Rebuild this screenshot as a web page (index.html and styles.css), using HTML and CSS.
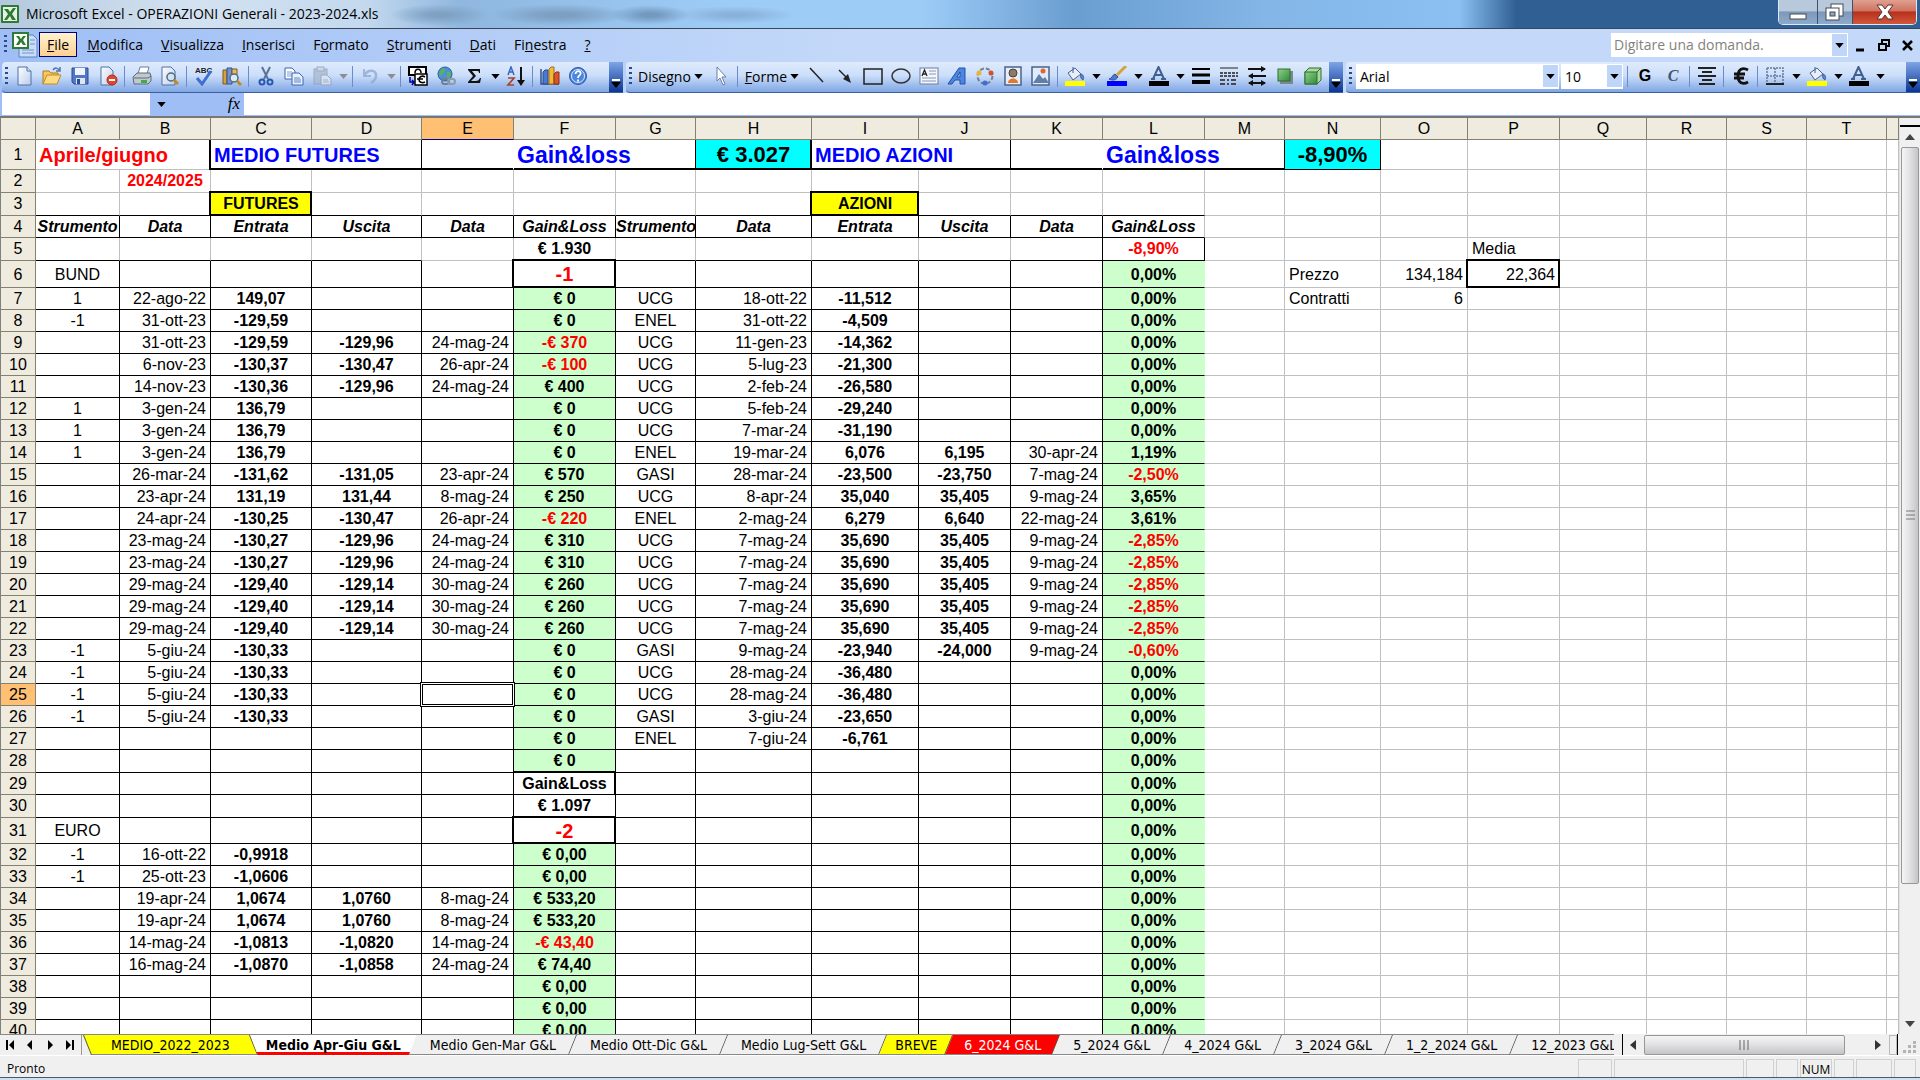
FILE: index.html
```html
<!DOCTYPE html>
<html lang="it">
<head>
<meta charset="utf-8">
<title>Microsoft Excel - OPERAZIONI Generali - 2023-2024.xls</title>
<link rel="stylesheet" href="styles.css">
</head>
<body>
<svg class="defs" aria-hidden="true">
  <defs>
    <linearGradient id="paper" x1="0" y1="0" x2="1" y2="1"><stop offset="0" stop-color="#fff"/><stop offset="1" stop-color="#b9cdee"/></linearGradient>
    <linearGradient id="green" x1="0" y1="0" x2="1" y2="1"><stop offset="0" stop-color="#8fd08a"/><stop offset="1" stop-color="#2f8a3a"/></linearGradient>
    <symbol id="i-xl" viewBox="0 0 20 20"><rect x="1" y="1" width="18" height="18" rx="1" fill="#2f7a34"/><rect x="3" y="3" width="14" height="14" fill="#e6f3e4"/><path d="M4 5h4l2 3 3-4h3l-4 6 4 6h-4l-2-4-3 4H4l4-6z" fill="#2c7c32"/></symbol>
    <symbol id="i-book" viewBox="0 0 26 26"><path d="M7 3h14l4 4v18H7z" fill="#c9dcf8" stroke="#5c82bd"/><path d="M10 18h12M10 21h12M18 8h5M18 12h5" stroke="#6f93cf"/><rect x="1" y="1" width="15" height="15" fill="#fff" stroke="#2f7a34" stroke-width="2"/><path d="M4 4h3l2 3 2-3h3l-3 4 3 5h-3l-2-3-2 3H4l3-5z" fill="#2c7c32"/></symbol>
    <symbol id="i-new" viewBox="0 0 20 20"><path d="M4 1h9l4 4v14H4z" fill="url(#paper)" stroke="#50709f"/><path d="M13 1v4h4" fill="#dce7f8" stroke="#50709f"/></symbol>
    <symbol id="i-open" viewBox="0 0 20 20"><path d="M1 18V5h6l2 2h7v3" fill="#f6c75a" stroke="#b07a1d"/><path d="M1 18l4-9h14l-4 9z" fill="#fbdc83" stroke="#c08a28"/><path d="M11 4c2-3 5-2 6 0M18 1v4h-4" fill="none" stroke="#4f77a8" stroke-width="1.5"/></symbol>
    <symbol id="i-save" viewBox="0 0 20 20"><path d="M2 2h16v16H4l-2-2z" fill="#5277c4" stroke="#2d4c91"/><rect x="5" y="2" width="10" height="7" fill="#eef3fc"/><rect x="6" y="12" width="9" height="6" fill="#dfe6f2"/><rect x="7" y="13" width="3" height="5" fill="#2d4c91"/></symbol>
    <symbol id="i-perm" viewBox="0 0 20 20"><path d="M3 1h8l4 4v14H3z" fill="url(#paper)" stroke="#50709f"/><circle cx="14" cy="14" r="5" fill="#e2452c" stroke="#b32a18"/><rect x="11" y="13" width="6" height="2" fill="#fff"/></symbol>
    <symbol id="i-print" viewBox="0 0 20 20"><path d="M6 8l2-7h9l-2 7z" fill="#fff" stroke="#6c7f96"/><path d="M1 11l4-4h13l1 3v5l-3 3H2z" fill="#c0c9cf" stroke="#5d6b78"/><path d="M2 12h14l3-2" fill="none" stroke="#5d6b78"/><rect x="9" y="14" width="6" height="3" fill="#3fae48"/></symbol>
    <symbol id="i-preview" viewBox="0 0 20 20"><path d="M2 1h9l4 4v14H2z" fill="url(#paper)" stroke="#50709f"/><circle cx="11" cy="11" r="4" fill="#cfe5f5" stroke="#55697c" stroke-width="1.5"/><path d="M14 14l4 4" stroke="#c08a28" stroke-width="3"/></symbol>
    <symbol id="i-spell" viewBox="0 0 20 20"><text x="1" y="7" font-family="Liberation Sans" font-size="8" font-weight="700" fill="#222">ABC</text><path d="M3 12l5 6 9-13" fill="none" stroke="#3f6fd0" stroke-width="3"/></symbol>
    <symbol id="i-research" viewBox="0 0 20 20"><path d="M1 4h4v14H1z" fill="#d9a13a" stroke="#7b5a1c"/><path d="M5 2h5v16H5z" fill="#6f93d4" stroke="#31548f"/><path d="M10 3h5v8h-5z" fill="#e4bb6a" stroke="#7b5a1c"/><circle cx="12" cy="12" r="4" fill="#d9ecf7" stroke="#55697c" stroke-width="1.5"/><path d="M15 15l4 4" stroke="#c08a28" stroke-width="3"/></symbol>
    <symbol id="i-cut" viewBox="0 0 20 20"><path d="M6 1l6 12M14 1L8 13" stroke="#5b7396" stroke-width="2"/><circle cx="6" cy="16" r="2.5" fill="none" stroke="#2957b5" stroke-width="2"/><circle cx="14" cy="16" r="2.5" fill="none" stroke="#2957b5" stroke-width="2"/></symbol>
    <symbol id="i-copy" viewBox="0 0 20 20"><path d="M1 2h7l3 3v8H1z" fill="#fff" stroke="#3d64ae"/><path d="M3 6h5M3 8h5M3 10h5" stroke="#7f9dd4"/><path d="M8 7h7l4 4v8H8z" fill="#e9f1fd" stroke="#3d64ae"/><path d="M10 12h6M10 14h7M10 16h7" stroke="#5f83c8"/></symbol>
    <symbol id="i-paste" viewBox="0 0 20 20"><rect x="2" y="3" width="13" height="15" fill="#aab8cf" stroke="#8c9bb5"/><rect x="5" y="1" width="7" height="4" fill="#c8d2e2" stroke="#8c9bb5"/><path d="M9 9h6l4 4v6H9z" fill="#dfe6f1" stroke="#8c9bb5"/><path d="M11 14h5M11 16h6" stroke="#9dabc4"/></symbol>
    <symbol id="i-undo" viewBox="0 0 20 20"><path d="M4 3v7h7" fill="none" stroke="#8fa7cf" stroke-width="2"/><path d="M4 10c4-8 13-6 12 0 0 3-2 5-5 7" fill="none" stroke="#8fa7cf" stroke-width="2.5"/></symbol>
    <symbol id="i-euroconv" viewBox="0 0 20 20"><rect x="1" y="1" width="17" height="8" fill="#fff" stroke="#000" stroke-width="2"/><path d="M7 7c0-5 6-5 6 0" fill="none" stroke="#000" stroke-width="1.5"/><rect x="7" y="8" width="12" height="11" fill="#fff" stroke="#000" stroke-width="1.5"/><path d="M17 11c-3-2-6 0-6 2.500s3 4 6 2.500M9 13h6" fill="none" stroke="#000" stroke-width="1.600"/><path d="M2 11v5h3M4 14l2 2-2 3" fill="none" stroke="#00009c" stroke-width="1.500"/></symbol>
    <symbol id="i-link" viewBox="0 0 20 20"><circle cx="9" cy="8" r="7" fill="#4f8fd6" stroke="#2d5f9b"/><path d="M5 3c4-2 5 1 3 3s-2 5-5 3zM11 6c3-1 4 1 4 3l-4 4z" fill="#58b45a"/><rect x="6" y="13" width="7" height="5" rx="2.500" fill="none" stroke="#6f7f90" stroke-width="2"/><rect x="12" y="13" width="7" height="5" rx="2.500" fill="none" stroke="#8d9bab" stroke-width="2"/></symbol>
    <symbol id="i-sum" viewBox="0 0 20 20"><path d="M4 3h12v4h-1c0-2-1-2-3-2H8l4 5-5 5h5c2 0 3-1 4-3h1l-1 5H4v-1l5-6-5-6z" fill="#111"/></symbol>
    <symbol id="i-sort" viewBox="0 0 20 20"><path d="M2 9l3-8 3 8M3 6h4" fill="none" stroke="#3566c0" stroke-width="1.500"/><path d="M2 12h6l-6 7h6" fill="none" stroke="#a8442b" stroke-width="1.700"/><path d="M15 1v15" stroke="#111" stroke-width="2"/><path d="M11 14h8l-4 6z" fill="#111"/></symbol>
    <symbol id="i-chart" viewBox="0 0 20 20"><path d="M1 3v15h18" stroke="#31548f" fill="none" stroke-width="1.500"/><path d="M3 6l2-2h3v14H3z" fill="#4a79d0" stroke="#284b90"/><path d="M9 3l2-2h3v17H9z" fill="#f0b93c" stroke="#a2711b"/><path d="M14 8l2-2h3v12h-5z" fill="#d9532c" stroke="#95300f"/></symbol>
    <symbol id="i-help" viewBox="0 0 20 20"><circle cx="10" cy="10" r="8.500" fill="#4d86dd" stroke="#2a58ab"/><circle cx="10" cy="10" r="6.500" fill="none" stroke="#dbe8fb"/><path d="M7.500 8c0-4 6-3.500 5 0-.5 1.500-2.500 1.500-2.500 4M10 13.500v2" fill="none" stroke="#fff" stroke-width="1.800"/></symbol>
    <symbol id="i-pointer" viewBox="0 0 20 20"><path d="M6 1v14l3-3 3 7 2-1-3-7h4z" fill="#fff" stroke="#6680a8"/></symbol>
    <symbol id="i-line" viewBox="0 0 20 20"><path d="M3 2l13 14" stroke="#222" stroke-width="1.500"/></symbol>
    <symbol id="i-arrow" viewBox="0 0 20 20"><path d="M4 4l8 8" stroke="#222" stroke-width="1.500"/><path d="M16 17l-8-4 5-5z" fill="#222"/></symbol>
    <symbol id="i-rect" viewBox="0 0 20 20"><rect x="1" y="3" width="18" height="15" fill="none" stroke="#222" stroke-width="1.500"/></symbol>
    <symbol id="i-oval" viewBox="0 0 20 20"><ellipse cx="10" cy="10" rx="9" ry="7" fill="none" stroke="#333" stroke-width="1.500"/></symbol>
    <symbol id="i-tbox" viewBox="0 0 20 20"><rect x="1" y="2" width="18" height="16" fill="#f3f7fd" stroke="#6a7fa2"/><path d="M3 10l2.500-6L8 10M4 8h3" fill="none" stroke="#222" stroke-width="1.300"/><path d="M10 5h7M10 8h7M3 12h14M3 15h14" stroke="#8496b3"/></symbol>
    <symbol id="i-wordart" viewBox="0 0 20 20"><path d="M1 18L12 2h6v16h-5v-4H8l-3 4zM10 11h3V6z" fill="#4c86e4" stroke="#24509f" fill-rule="evenodd"/></symbol>
    <symbol id="i-diagram" viewBox="0 0 20 20"><circle cx="10" cy="10" r="7.500" fill="none" stroke="#6f7f96" stroke-width="2" stroke-dasharray="4 2"/><circle cx="4" cy="7" r="2.500" fill="#e8b530"/><circle cx="16" cy="7" r="2.500" fill="#d4502d"/><circle cx="10" cy="17" r="2.500" fill="#3d6fd0"/></symbol>
    <symbol id="i-clip" viewBox="0 0 20 20"><rect x="2" y="1" width="16" height="18" fill="#e6edf8" stroke="#4c638a" stroke-width="1.500"/><circle cx="10" cy="7" r="4" fill="#8b7a68" stroke="#4b4036"/><path d="M5 17c0-6 10-6 10 0z" fill="#e4782b"/></symbol>
    <symbol id="i-pic" viewBox="0 0 20 20"><rect x="1" y="1" width="17" height="18" fill="#dfeafa" stroke="#4c638a" stroke-width="1.500"/><path d="M2 17l6-9 4 5 2-2 4 6z" fill="#5f7fa8"/><circle cx="12" cy="5" r="2.500" fill="#e2652f"/></symbol>
    <symbol id="i-fill" viewBox="0 0 20 20"><path d="M3 7l7-5 6 6-8 6z" fill="#e8eef7" stroke="#4d6387"/><path d="M8 1v6M16 8c3 1 3 4 2 6-2-1-3-3-2-6" fill="#5d86cd" stroke="#3b5f9f"/><rect y="15" width="20" height="5" fill="#ff0"/></symbol>
    <symbol id="i-brush" viewBox="0 0 20 20"><path d="M19 0l-9 9" stroke="#d9a13a" stroke-width="3"/><path d="M2 13c3 0 3-4 6-5l3 3c-2 3-5 4-9 2z" fill="#4c79cf" stroke="#294f98"/><rect y="15" width="20" height="5" fill="#00f"/></symbol>
    <symbol id="i-fontc" viewBox="0 0 20 20"><path d="M4 13L9.500 1 15 13M6 9h7M2 13h4M12 13h5" fill="none" stroke="#3f608f" stroke-width="2"/><rect y="15" width="20" height="5" fill="#000"/></symbol>
    <symbol id="i-lw" viewBox="0 0 20 20"><path d="M1 3h18" stroke="#000" stroke-width="2"/><path d="M1 9h18" stroke="#000" stroke-width="3"/><path d="M1 16h18" stroke="#000" stroke-width="4"/></symbol>
    <symbol id="i-dash" viewBox="0 0 20 20"><path d="M1 2h18" stroke="#222"/><path d="M1 7h18M1 10h18" stroke="#222" stroke-dasharray="3 1" stroke-width="1.500"/><path d="M1 14h18M1 18h18" stroke="#222" stroke-dasharray="5 2 2 2" stroke-width="1.500"/></symbol>
    <symbol id="i-arrs" viewBox="0 0 20 20"><path d="M1 3h17M2 10h17M2 17h16" stroke="#111" stroke-width="1.800"/><path d="M14 0l5 3-5 3zM6 7l-5 3 5 3zM6 14l-5 3 5 3zM14 14l5 3-5 3z" fill="#111"/></symbol>
    <symbol id="i-shadow" viewBox="0 0 20 20"><rect x="5" y="5" width="13" height="13" fill="#7c8794"/><rect x="3" y="3" width="12" height="12" fill="url(#green)" stroke="#2f6f2c"/></symbol>
    <symbol id="i-3d" viewBox="0 0 20 20"><path d="M2 6l4-4h12v12l-4 4H2z" fill="#a9dba1" stroke="#2f6f2c"/><rect x="2" y="6" width="12" height="12" fill="url(#green)" stroke="#2f6f2c"/><path d="M14 6l4-4" stroke="#2f6f2c"/></symbol>
    <symbol id="i-center" viewBox="0 0 20 20"><path d="M1 2h18M5 6h10M1 10h18M5 14h10M2 18h16" stroke="#222" stroke-width="2"/></symbol>
    <symbol id="i-euro" viewBox="0 0 20 20"><path d="M17 4c-5-3-10-1-10 6s5 9 10 6M3 8h11M3 12h10" fill="none" stroke="#111" stroke-width="2.800"/></symbol>
    <symbol id="i-border" viewBox="0 0 20 20"><path d="M2 2h16v16M2 2v16M10 2v16M2 10h16" fill="none" stroke="#667a99" stroke-width="1.500" stroke-dasharray="2 1"/><path d="M1 18h18" stroke="#222" stroke-width="2"/></symbol>
    <symbol id="i-down" viewBox="0 0 10 6"><path d="M0 0h10L5 6z" fill="currentColor"/></symbol>
  </defs>
</svg>

<div class="app">
  <header class="title">
    <svg class="i20"><use href="#i-xl"/></svg>
    <h1>Microsoft Excel - OPERAZIONI Generali - 2023-2024.xls</h1>
    <div class="winbtns">
      <button class="w-min" aria-label="Riduci a icona"><svg width="20" height="24"><rect x="2" y="14" width="16" height="5" fill="#fff" stroke="#444a55"/></svg></button>
      <button class="w-max" aria-label="Ripristina"><svg width="22" height="24"><rect x="7" y="4" width="12" height="12" fill="#fff" stroke="#444a55"/><rect x="2" y="8" width="13" height="12" fill="#fff" stroke="#444a55"/><rect x="6" y="12" width="5" height="4" fill="#8fa6c4" stroke="#444a55"/></svg></button>
      <button class="w-close" aria-label="Chiudi"><svg width="20" height="24"><path d="M2 5h5l3 4 3-4h5l-5 7 5 7h-5l-3-4-3 4H2l5-7z" fill="#fff" stroke="#5a3030"/></svg></button>
    </div>
  </header>

  <nav class="menu">
    <span class="grip"></span>
    <svg class="i26"><use href="#i-book"/></svg>
    <button class="on"><u>F</u>ile</button><button><u>M</u>odifica</button><button><u>V</u>isualizza</button><button><u>I</u>nserisci</button><button>F<u>o</u>rmato</button><button><u>S</u>trumenti</button><button><u>D</u>ati</button><button>Fi<u>n</u>estra</button><button><u>?</u></button>
    <label class="ask"><input type="text" placeholder="Digitare una domanda." aria-label="Digitare una domanda"><svg class="dd"><use href="#i-down"/></svg></label>
    <div class="docbtns">
      <button aria-label="Riduci"><svg width="12" height="14"><path d="M2 12h8" stroke="#000" stroke-width="3"/></svg></button>
      <button aria-label="Ripristina finestra"><svg width="12" height="14"><path d="M4 5V2h7v6H8" fill="none" stroke="#000" stroke-width="2"/><rect x="1" y="6" width="7" height="6" fill="none" stroke="#000" stroke-width="2"/></svg></button>
      <button aria-label="Chiudi finestra"><svg width="12" height="14"><path d="M1 3l9 9M10 3l-9 9" stroke="#000" stroke-width="2.500"/></svg></button>
    </div>
  </nav>

  <div class="bars" id="bars">
    <div class="bar bar-std" data-tools="new open save perm | print preview | spell research | cut copy paste:off | undo:off | euroconv link sum:dd sort | chart help"></div>
    <div class="bar bar-draw" data-tools="@Disegno pointer | @Forme line arrow rect oval tbox wordart diagram clip pic | fill:dd brush:dd fontc:dd lw dash arrs shadow 3d"></div>
    <div class="bar bar-fmt" data-tools="| *G *C | center | euro | border:dd fill:dd fontc:dd">
      <label class="combo font"><select aria-label="Tipo di carattere"><option>Arial</option></select><svg class="dd"><use href="#i-down"/></svg></label>
      <label class="combo size"><select aria-label="Dimensione"><option>10</option></select><svg class="dd"><use href="#i-down"/></svg></label>
    </div>
  </div>

  <div class="formula">
    <input class="namebox" type="text" aria-label="Casella nome">
    <div class="fx"><svg class="dd"><use href="#i-down"/></svg><i>fx</i></div>
    <input class="fbox" type="text" aria-label="Barra della formula">
  </div>

  <main class="work">
    <div class="sheet"><table id="grid"></table></div>
    <div class="vscroll">
      <span class="split"></span>
      <button aria-label="Su"><svg width="10" height="6"><path d="M0 6h10L5 0z" fill="#444"/></svg></button>
      <div class="vtrack"><span class="vthumb"><svg width="9" height="10"><path d="M0 1h9M0 5h9M0 9h9" stroke="#777"/></svg></span></div>
      <button aria-label="Giù"><svg width="10" height="6"><path d="M0 0h10L5 6z" fill="#444"/></svg></button>
    </div>
  </main>

  <div class="tabrow">
    <div class="nav">
      <button aria-label="Primo foglio"><svg width="12" height="12"><path d="M3 1v10" stroke="#000" stroke-width="2"/><path d="M10 1L5 6l5 5z"/></svg></button>
      <button aria-label="Foglio precedente"><svg width="12" height="12"><path d="M8 1v10L3 6z"/></svg></button>
      <button aria-label="Foglio successivo"><svg width="12" height="12"><path d="M4 1v10l5-5z"/></svg></button>
      <button aria-label="Ultimo foglio"><svg width="12" height="12"><path d="M9 1v10" stroke="#000" stroke-width="2"/><path d="M2 1l5 5-5 5z"/></svg></button>
    </div>
    <div class="tabs">
      <button class="tab back yellow wide">MEDIO_2022_2023</button><button class="tab active">Medio Apr-Giu G&amp;L</button><button class="tab">Medio Gen-Mar G&amp;L</button><button class="tab">Medio Ott-Dic G&amp;L</button><button class="tab">Medio Lug-Sett G&amp;L</button><button class="tab yellow slim">BREVE</button><button class="tab red">6_2024 G&amp;L</button><button class="tab">5_2024 G&amp;L</button><button class="tab">4_2024 G&amp;L</button><button class="tab">3_2024 G&amp;L</button><button class="tab">1_2_2024 G&amp;L</button><button class="tab">12_2023 G&amp;L</button>
    </div>
    <div class="hscroll">
      <button aria-label="Sinistra"><svg width="6" height="10"><path d="M6 0v10L0 5z" fill="#333"/></svg></button>
      <div class="htrack"><span class="hthumb"><svg width="11" height="10"><path d="M1 0v10M5 0v10M9 0v10" stroke="#666"/></svg></span></div>
      <button aria-label="Destra"><svg width="6" height="10"><path d="M0 0v10l6-5z" fill="#333"/></svg></button>
      <span class="hsplit"></span>
    </div>
    <svg class="sizer" width="14" height="14"><path d="M10 1h3v3h-3zM10 5h3v3h-3zM10 10h3v3h-3zM5 5h3v3H5zM5 10h3v3H5zM0 10h3v3H0z" fill="#b4b4b4"/></svg>
  </div>

  <footer class="status">
    <span class="ready">Pronto</span>
    <span class="s s34"></span><span class="s s130"></span><span class="s s28"></span><span class="s s22"></span><span class="s s30">NUM</span><span class="s s20"></span><span class="s s36"></span><span class="s s22"></span>
  </footer>
</div>
<script src="app.js"></script>
</body>
</html>
```
FILE: styles.css
```css
* { box-sizing: border-box; }
body { margin: 0; font-family: "Open Sans", "Noto Sans", sans-serif; font-size: 14px; color: #000; }
button, input, select { font: inherit; color: inherit; border: 0; padding: 0; margin: 0; background: none; border-radius: 0; }
svg { display: block; flex: none; }
.defs { position: absolute; width: 0; height: 0; }
.i20 { width: 20px; height: 20px; }
.i26 { width: 26px; height: 26px; }
.dd { width: 9px; height: 5px; }

.app { display: flex; flex-direction: column; height: 100vh; overflow: hidden; background: #9ebef5; border-bottom: 2px solid #cfe0f2; }

.title {
  display: flex; align-items: center; gap: 6px; flex: none; height: 29px; border-bottom: 1px solid #3a4654;
  background:
    radial-gradient(ellipse 50px 11px at 440px 15px, #7fa2c4 20%, transparent),
    radial-gradient(ellipse 70px 11px at 560px 15px, #7c9fc2 20%, transparent),
    radial-gradient(ellipse 40px 10px at 650px 15px, #7499bf 20%, transparent),
    radial-gradient(ellipse 60px 9px at 735px 15px, #8ab1d9 20%, transparent),
    linear-gradient(to right, #b4c9de 0, #d3e2f1 10%, #c4d9ee 19%, #8fb7df 24%, #9dccf7 38%, #9dccf7 48%, #6a9dd0 56%, #84b6e8 66%, #8cc0f2 76%, #2f5f93 79%, #2f5f93 100%);
}
.title h1 { margin: 0; flex: 1; font-size: 14px; font-weight: 400; line-height: 26px; white-space: nowrap; }
.winbtns { display: flex; align-self: flex-start; height: 25px; margin-right: 3px; border: 1px solid #dce8f5; border-top: 0; border-radius: 0 0 5px 5px; overflow: hidden; }
.winbtns button { display: flex; align-items: center; justify-content: center; background: linear-gradient(#b8c9dc 45%, #7d98b8 50%, #8fabcb); border-right: 1px solid #3b526e; }
.w-min { width: 39px; }
.w-max { width: 35px; }
.winbtns .w-close { width: 63px; border-right: 0; background: linear-gradient(#e0a090 0, #cf7360 45%, #b8301c 50%, #d2573a); }

.menu { display: flex; align-items: center; flex: none; height: 33px; padding: 0 6px 2px 4px; background: linear-gradient(to right, #9ebef5, #c4d9f9 45%); }
.grip { flex: none; width: 3px; height: 19px; background: repeating-linear-gradient(#2f4b86 0 2px, transparent 2px 5px); }
.menu > svg { margin: 0 1px 0 5px; }
.menu > button { height: 25px; padding: 0 7px; margin-right: 2px; border: 1px solid transparent; line-height: 22px; }
.menu > .on { border-color: #000080; background: linear-gradient(#fff3cf, #ffd091); }
.ask { display: flex; align-items: center; margin-left: auto; width: 237px; height: 24px; background: #fff; padding: 1px; }
.ask input { flex: 1; min-width: 0; padding-left: 2px; }
.ask input::placeholder { color: #84827c; opacity: 1; }
.ask .dd, .combo .dd { box-sizing: content-box; padding: 9px 3px 8px; background: #c0d6f8; }
.docbtns { display: flex; gap: 12px; margin-left: 6px; width: 60px; }

.bars { display: flex; flex: none; height: 31px; padding-left: 2px; gap: 3px; background: linear-gradient(to right, #9ebef5, #c4d9f9 45%); }
.bar { display: flex; align-items: center; border-bottom: 1px solid #3b619c; border-radius: 4px 0 0 4px; background: linear-gradient(#dfebfc, #cbdefa 45%, #7fa6e4); padding: 0 0 2px 3px; }
.bar .grip { margin-right: 2px; }
.bar-std { width: 621px; }
.bar-draw { width: 717px; }
.bar-fmt { flex: 1; }
.tool { display: flex; align-items: center; justify-content: center; flex: none; width: 28px; height: 26px; font-family: "Liberation Sans", Arial, sans-serif; font-weight: 700; font-size: 16px; }
.tool.it { font-family: "Liberation Serif", serif; font-style: italic; color: #45556e; }
.drop { display: flex; align-items: center; justify-content: center; flex: none; width: 14px; height: 26px; }
.drop.off { color: #8a8d93; }
.tool.off { opacity: .75; }
.word { display: flex; align-items: center; gap: 3px; padding: 0 4px; height: 26px; }
.sep { flex: none; width: 1px; height: 21px; margin: 0 3px 0 2px; background: #6a8ccb; }
.end { display: flex; align-items: flex-end; justify-content: center; margin: 0 0 -2px auto; align-self: stretch; width: 14px; padding-bottom: 4px; color: #000; background: linear-gradient(#7ea5e6, #0b3694); }
.end svg { width: 10px; height: 9px; }
.combo { display: flex; align-items: center; height: 25px; background: #fff; padding: 1px; margin-right: 2px; }
.combo select { flex: 1; min-width: 0; appearance: none; padding-left: 3px; }
.combo.font { width: 203px; margin-left: 2px; }
.combo.size { width: 62px; }

.formula { display: flex; flex: none; height: 23px; padding: 0 0 1px 2px; background: #9ebef5; }
.namebox { width: 148px; background: #fff; }
.fx { display: flex; align-items: center; justify-content: space-between; width: 94px; padding: 0 4px 0 7px; font-family: "Liberation Serif", serif; font-size: 17px; }
.fbox { flex: 1; background: #fff; }

.work { display: flex; flex: 1; min-height: 0; border-top: 2px solid #777; border-left: 1px solid #808080; background: #fff; }
.sheet { flex: 1; min-width: 0; overflow: hidden; }
table { table-layout: fixed; width: 100%; border-collapse: separate; border-spacing: 0; font-family: "Liberation Sans", Arial, sans-serif; font-size: 16px; }
th, td { height: 22px; padding: 0 2px; border-right: 1px solid #c0c0c0; border-bottom: 1px solid #c0c0c0; line-height: 20px; vertical-align: bottom; white-space: nowrap; overflow: hidden; text-align: right; }
td { padding-right: 4px; }
th { background: #efebde; border-color: #83816f; text-align: center; font-weight: 400; }
th.sel { background: #ffc073; }
thead th.sel { border-bottom-color: #000080; }
.h23 > * { height: 23px; line-height: 22px; }
.h26 > * { height: 26px; line-height: 24px; }
.h27 > * { height: 27px; line-height: 25px; }
.h30 > * { height: 30px; line-height: 28px; }
.k { border-color: #000; }
.kr { border-right-color: #000; }
.kb { border-bottom-color: #000; }
.ctr { text-align: center; padding: 0 2px; }
.b { text-align: center; font-weight: 700; padding: 0 2px; }
.hd { text-align: center; font-weight: 700; font-style: italic; padding: 0; }
.g { background: #cfc; }
.nor { border-right-color: transparent; }
.gr { border-right-color: #cfc; }
.neg { color: #f00; }
.l { text-align: left; padding-left: 4px; }
.big { font-weight: 700; font-size: 20px; text-align: left; padding-left: 3px; }
.gl { font-size: 23px; }
.blue { color: #00f; }
.mid { font-size: 20px; }
.cy { background: #0ff; font-size: 22px; text-align: center; padding: 0; }
.ul { box-shadow: inset 0 -1px #000; }
.tl { box-shadow: inset 0 -1px #000, -2px 0 #000; }
.box { position: relative; overflow: visible; border-color: #000; box-shadow: inset -1px -1px #000, -2px -2px #000, 0 -2px #000, -2px 0 #000; }
.yel { background: #ff0; }
.thr { box-shadow: inset -1px 0 #000, 0 -2px #000; position: relative; }
.cur { position: relative; overflow: visible; }
.cur::after { content: ""; position: absolute; inset: 0; box-shadow: inset 0 0 0 1px #000, 0 0 0 1px #fff, 0 0 0 2px #000; }

.vscroll { display: flex; flex-direction: column; flex: none; width: 21px; background: #f0f0f0; border-left: 1px solid #e0e0e0; }
.split { height: 9px; background: #f0f0f0; border-bottom: 2px solid #000; }
.vscroll button { display: flex; align-items: center; justify-content: center; height: 20px; }
.vtrack { flex: 1; }
.vthumb { display: flex; align-items: center; justify-content: center; width: 18px; height: 85%; margin: 0 auto; border: 1px solid #979797; border-radius: 2px; background: linear-gradient(to right, #f5f5f5, #e3e3e5 45%, #c4c5c9); }

.tabrow { display: flex; flex: none; height: 21px; background: #f0f0f0; }
.nav { display: flex; align-items: center; width: 82px; border-top: 1px solid #888; border-right: 1px solid #999; }
.nav button { width: 20px; display: flex; justify-content: center; }
.tabs { display: flex; flex: 1; min-width: 0; overflow: hidden; padding-left: 5px; border-top: 1px solid #888; font-family: "DejaVu Sans Condensed", "DejaVu Sans", sans-serif; font-size: 14px; }
.tab { position: relative; flex: none; z-index: 0; height: 20px; padding: 0 17px; line-height: 19px; white-space: nowrap; }
.tab::before { content: ""; position: absolute; inset: 0; z-index: -1; transform: skewX(-22deg); background: #f0f0f0; border-right: 1px solid #555; border-bottom: 1px solid #888; }
.tab.back::before { transform: skewX(22deg); border-left: 1px solid #555; }
.tab.yellow::before { background: #ff0; }
.tab.red { color: #fff; padding: 0 15px; }
.tab.red::before { background: #f00; }
.tab.wide { padding: 0 24px; }
.tab.slim { padding: 0 12px; }
.tab.active { z-index: 1; padding: 0 12px; font-weight: 700; }
.tab.active::before { inset: -1px -4px 0 -4px; transform: none; background: linear-gradient(#fff 18px, #f00 18px); border: 0; clip-path: polygon(0 0, 100% 0, calc(100% - 8px) 100%, 8px 100%); }
.hscroll { display: flex; align-items: center; flex: none; width: 284px; border-left: 8px solid #f0f0f0; border-right: 1px solid #000; box-shadow: inset 1px 0 #000; }
.hscroll button { display: flex; align-items: center; justify-content: center; width: 22px; height: 20px; }
.htrack { flex: 1; }
.hthumb { display: flex; align-items: center; justify-content: center; width: 90%; height: 20px; border: 1px solid #979797; border-radius: 2px; background: linear-gradient(#f5f5f5, #e3e3e5 45%, #c4c5c9); }
.hsplit { width: 8px; height: 20px; border: 1px solid #bbb; background: #f0f0f0; }
.sizer { margin: 6px 3px 0 5px; }

.status { display: flex; flex: none; height: 23px; gap: 2px; padding: 3px 4px 0 7px; background: #f0f0f0; border-top: 1px solid #fff; border-bottom: 1px solid #4a5a68; font-size: 12px; line-height: 20px; }
.ready { flex: 1; }
.s { border: 1px solid #d0d0d0; border-bottom: 0; text-align: center; }
.s20 { width: 20px; }
.s22 { width: 22px; }
.s28 { width: 28px; }
.s30 { width: 32px; }
.s34 { width: 34px; }
.s36 { width: 36px; }
.s130 { width: 130px; }
```
FILE: app.js
```js
// Toolbars: "|" separator, "@" text menu, "*" letter button, ":dd" with drop arrow, ":off" disabled.
const down = '<svg class="dd"><use href="#i-down"/></svg>';
document.querySelectorAll('.bar').forEach(bar => {
  let html = '';
  for (const t of bar.dataset.tools.split(' ')) {
    const [name, mod] = t.split(':');
    if (t === '|') html += '<span class="sep"></span>';
    else if (t[0] === '@') html += `<button class="word"><span>${t === '@Forme' ? '<u>F</u>orme' : 'Dise<u>g</u>no'}</span>${down}</button>`;
    else if (t[0] === '*') html += `<button class="tool ${t === '*C' ? 'it' : ''}">${t[1]}</button>`;
    else {
      const off = mod === 'off' ? ' off' : '';
      html += `<button class="tool${off}" aria-label="${name}"><svg class="i20"><use href="#i-${name}"/></svg></button>`;
      if (mod) html += `<button class="drop${off}" aria-label="${name}, opzioni">${down}</button>`;
    }
  }
  html += '<button class="end" aria-label="Opzioni barra"><svg viewBox="0 0 10 9"><path d="M1 0h8v2H1z" fill="#fff"/><path d="M0 3h10L5 9z"/></svg></button>';
  bar.insertAdjacentHTML('afterbegin', '<span class="grip"></span>');
  bar.insertAdjacentHTML('beforeend', html);
});

const cols = 'ABCDEFGHIJKLMNOPQRST'.split('');
const widths = [84, 91, 101, 110, 92, 102, 80, 116, 107, 92, 92, 102, 80, 96, 87, 92, 87, 80, 80, 80];

// Columns A to L, from row 6 on.
const data = `BUND|||||-1||||||0,00%
1|22-ago-22|149,07|||€ 0|UCG|18-ott-22|-11,512|||0,00%
-1|31-ott-23|-129,59|||€ 0|ENEL|31-ott-22|-4,509|||0,00%
|31-ott-23|-129,59|-129,96|24-mag-24|-€ 370|UCG|11-gen-23|-14,362|||0,00%
|6-nov-23|-130,37|-130,47|26-apr-24|-€ 100|UCG|5-lug-23|-21,300|||0,00%
|14-nov-23|-130,36|-129,96|24-mag-24|€ 400|UCG|2-feb-24|-26,580|||0,00%
1|3-gen-24|136,79|||€ 0|UCG|5-feb-24|-29,240|||0,00%
1|3-gen-24|136,79|||€ 0|UCG|7-mar-24|-31,190|||0,00%
1|3-gen-24|136,79|||€ 0|ENEL|19-mar-24|6,076|6,195|30-apr-24|1,19%
|26-mar-24|-131,62|-131,05|23-apr-24|€ 570|GASI|28-mar-24|-23,500|-23,750|7-mag-24|-2,50%
|23-apr-24|131,19|131,44|8-mag-24|€ 250|UCG|8-apr-24|35,040|35,405|9-mag-24|3,65%
|24-apr-24|-130,25|-130,47|26-apr-24|-€ 220|ENEL|2-mag-24|6,279|6,640|22-mag-24|3,61%
|23-mag-24|-130,27|-129,96|24-mag-24|€ 310|UCG|7-mag-24|35,690|35,405|9-mag-24|-2,85%
|23-mag-24|-130,27|-129,96|24-mag-24|€ 310|UCG|7-mag-24|35,690|35,405|9-mag-24|-2,85%
|29-mag-24|-129,40|-129,14|30-mag-24|€ 260|UCG|7-mag-24|35,690|35,405|9-mag-24|-2,85%
|29-mag-24|-129,40|-129,14|30-mag-24|€ 260|UCG|7-mag-24|35,690|35,405|9-mag-24|-2,85%
|29-mag-24|-129,40|-129,14|30-mag-24|€ 260|UCG|7-mag-24|35,690|35,405|9-mag-24|-2,85%
-1|5-giu-24|-130,33|||€ 0|GASI|9-mag-24|-23,940|-24,000|9-mag-24|-0,60%
-1|5-giu-24|-130,33|||€ 0|UCG|28-mag-24|-36,480|||0,00%
-1|5-giu-24|-130,33|||€ 0|UCG|28-mag-24|-36,480|||0,00%
-1|5-giu-24|-130,33|||€ 0|GASI|3-giu-24|-23,650|||0,00%
|||||€ 0|ENEL|7-giu-24|-6,761|||0,00%
|||||€ 0||||||0,00%
|||||Gain&amp;Loss||||||0,00%
|||||€ 1.097||||||0,00%
EURO|||||-2||||||0,00%
-1|16-ott-22|-0,9918|||€ 0,00||||||0,00%
-1|25-ott-23|-1,0606|||€ 0,00||||||0,00%
|19-apr-24|1,0674|1,0760|8-mag-24|€ 533,20||||||0,00%
|19-apr-24|1,0674|1,0760|8-mag-24|€ 533,20||||||0,00%
|14-mag-24|-1,0813|-1,0820|14-mag-24|-€ 43,40||||||0,00%
|16-mag-24|-1,0870|-1,0858|24-mag-24|€ 74,40||||||0,00%
|||||€ 0,00||||||0,00%
|||||€ 0,00||||||0,00%
|||||€ 0,00||||||0,00%`.split('\n').map(r => r.split('|'));

const heights = { 1: 'h30', 2: 'h23', 3: 'h23', 5: 'h23', 6: 'h27', 28: 'h23', 30: 'h23', 31: 'h26' };
const td = (cls = '', text = '', span = 1) => `<td class="${cls}"${span > 1 ? ` colspan="${span}"` : ''}>${text}</td>`;
const blank = n => td().repeat(n);
const row = (n, cells) => `<tr class="${heights[n] || ''}"><th scope="row"${n === 25 ? ' class="sel"' : ''}>${n}</th>${cells}</tr>`;

let body = row(1,
  td('big neg', 'Aprile/giugno', 2) + td('big blue k tl', 'MEDIO FUTURES', 2) + td('kb ul nor') +
  td('big gl blue k ul', 'Gain&amp;loss', 2) + td('big cy k ul', '€ 3.027') + td('big blue k tl', 'MEDIO AZIONI', 2) +
  td('kb ul nor') + td('big gl blue k ul', 'Gain&amp;loss', 2) + td('big cy k', '-8,90%') + blank(7));
body += row(2, td() + td('b neg', '2024/2025') + blank(19));
body += row(3, td('kb').repeat(2) + td('b yel box', 'FUTURES') + td('kb').repeat(5) + td('b yel box', 'AZIONI') + td('kb').repeat(3) + blank(9));
body += row(4, ['Strumento', 'Data', 'Entrata', 'Uscita', 'Data', 'Gain&amp;Loss', 'Strumento', 'Data', 'Entrata', 'Uscita', 'Data']
  .map(t => td('hd k', t)).join('') + td('hd kb', 'Gain&amp;Loss') + blank(9));
body += row(5, td('kb').repeat(4) + td() + td('b kb', '€ 1.930') + td('kb').repeat(4) + td('k') + td('b k neg', '-8,90%') +
  blank(3) + td('l', 'Media') + blank(5));

const base = ['ctr', '', 'b', 'b', '', 'b g', 'ctr', '', 'b', 'b', '', 'b g'];
data.forEach((r, i) => {
  const n = i + 6;
  let cells = r.map((t, c) => {
    let cls = base[c] + (c === 11 ? ' kb gr' : ' k');
    if (c === 5 && n >= 29 && n <= 31) cls = 'b k';
    if (c === 5 && (n === 6 || n === 31)) cls = 'b mid box neg';
    if (c === 5 && n === 29) cls += ' thr';
    if ((c === 5 || c === 11) && t[0] === '-') cls += ' neg';
    if (c === 4 && n === 25) cls += ' cur';
    return td(cls, t);
  }).join('');
  if (n === 6) cells += td() + td('l', 'Prezzo') + td('', '134,184') + td('box', '22,364') + blank(5);
  else if (n === 7) cells += td() + td('l', 'Contratti') + td('', '6') + blank(6);
  else cells += blank(9);
  body += row(n, cells);
});

document.getElementById('grid').innerHTML =
  '<colgroup><col style="width:35px">' + widths.map(w => `<col style="width:${w}px">`).join('') + '<col></colgroup>' +
  '<thead><tr><th></th>' + cols.map(c => `<th scope="col"${c === 'E' ? ' class="sel"' : ''}>${c}</th>`).join('') + '<th></th></tr></thead><tbody>' + body + '</tbody>';
```
